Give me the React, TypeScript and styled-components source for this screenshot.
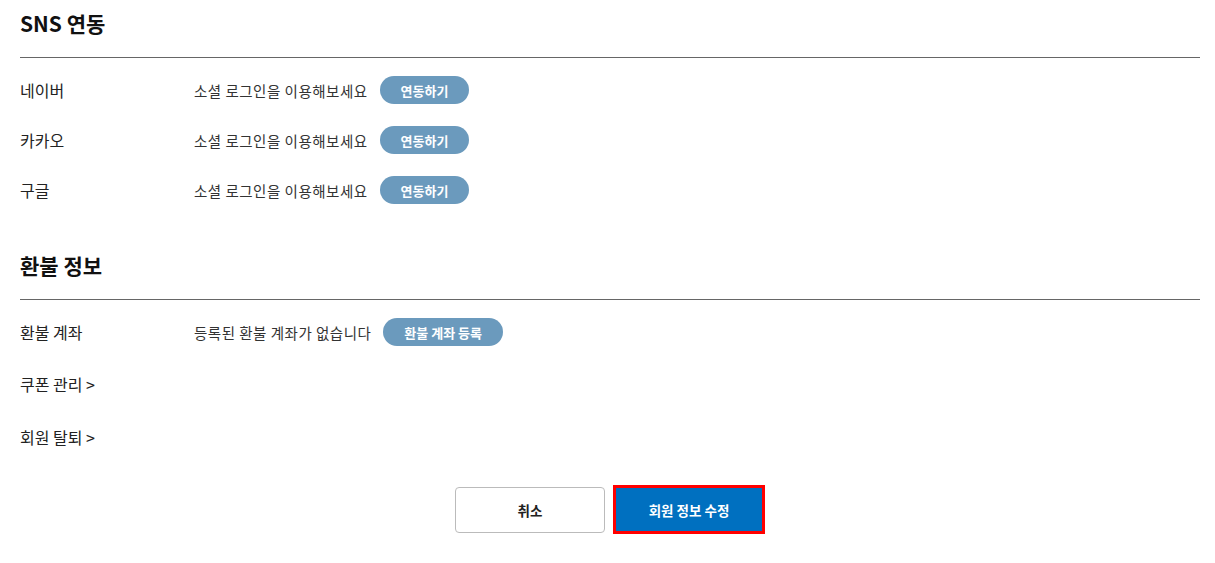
import React from 'react';
import styled, { createGlobalStyle } from 'styled-components';

const GlobalStyle = createGlobalStyle`
    body {
        margin: 0;
        background: #ffffff;
        font-family: "Noto Sans CJK KR", "Noto Sans", sans-serif;
        color: #222222;
    }
`;

const Page = styled.div({
    padding: '0 15px 0 20px',
});

const Section = styled.section<{ $first?: boolean }>(props => ({
    marginTop: props.$first ? '0' : '27px',
}));

const SectionTitle = styled.h2({
    margin: 0,
    padding: '8px 0 18px',
    fontSize: '21px',
    lineHeight: '31px',
    fontWeight: 700,
    color: '#111111',
    borderBottom: '1px solid #666666',
});

const List = styled.div({
    paddingTop: '7px',
    display: 'flex',
    flexDirection: 'column',
});

const Row = styled.div<{ $height?: number }>(props => ({
    display: 'flex',
    alignItems: 'center',
    height: `${props.$height || 50}px`,
}));

const Label = styled.div({
    width: '174px',
    flexShrink: 0,
    fontSize: '16px',
    color: '#222222',
});

const LinkLabel = styled.a({
    fontSize: '16px',
    color: '#222222',
    textDecoration: 'none',
    cursor: 'pointer',
});

const Value = styled.span({
    fontSize: '14.5px',
    letterSpacing: '0.5px',
    color: '#333333',
});

const PillButton = styled.button({
    marginLeft: '12px',
    height: '28px',
    padding: '0 21px',
    border: 'none',
    borderRadius: '14px',
    background: '#6b9abd',
    color: '#ffffff',
    fontFamily: 'inherit',
    fontSize: '13px',
    fontWeight: 700,
    cursor: 'pointer',
});

const Actions = styled.div({
    display: 'flex',
    justifyContent: 'center',
    alignItems: 'center',
    gap: '8px',
    marginTop: '22px',
});

const ActionButton = styled.button<{ $primary?: boolean }>(props => ({
    width: props.$primary ? '152px' : '150px',
    height: props.$primary ? '49px' : '46px',
    boxSizing: 'border-box',
    border: props.$primary ? '3px solid #ff0000' : '1px solid #bbbbbb',
    borderRadius: props.$primary ? '0' : '4px',
    background: props.$primary ? '#0070c0' : '#ffffff',
    color: props.$primary ? '#ffffff' : '#222222',
    fontFamily: 'inherit',
    fontSize: '13.5px',
    fontWeight: 700,
    cursor: 'pointer',
}));

const snsList = ['네이버', '카카오', '구글'];

export default function App() {
    return (
        <>
            <GlobalStyle />
            <Page>
                <Section $first>
                    <SectionTitle>SNS 연동</SectionTitle>
                    <List>
                        {snsList.map(name => (
                            <Row key={name}>
                                <Label>{name}</Label>
                                <Value>소셜 로그인을 이용해보세요</Value>
                                <PillButton>연동하기</PillButton>
                            </Row>
                        ))}
                    </List>
                </Section>

                <Section>
                    <SectionTitle>환불 정보</SectionTitle>
                    <List>
                        <Row>
                            <Label>환불 계좌</Label>
                            <Value>등록된 환불 계좌가 없습니다</Value>
                            <PillButton>환불 계좌 등록</PillButton>
                        </Row>
                        <Row $height={53}>
                            <LinkLabel>쿠폰 관리 &gt;</LinkLabel>
                        </Row>
                        <Row $height={53}>
                            <LinkLabel>회원 탈퇴 &gt;</LinkLabel>
                        </Row>
                    </List>
                </Section>

                <Actions>
                    <ActionButton>취소</ActionButton>
                    <ActionButton $primary>회원 정보 수정</ActionButton>
                </Actions>
            </Page>
        </>
    );
}
